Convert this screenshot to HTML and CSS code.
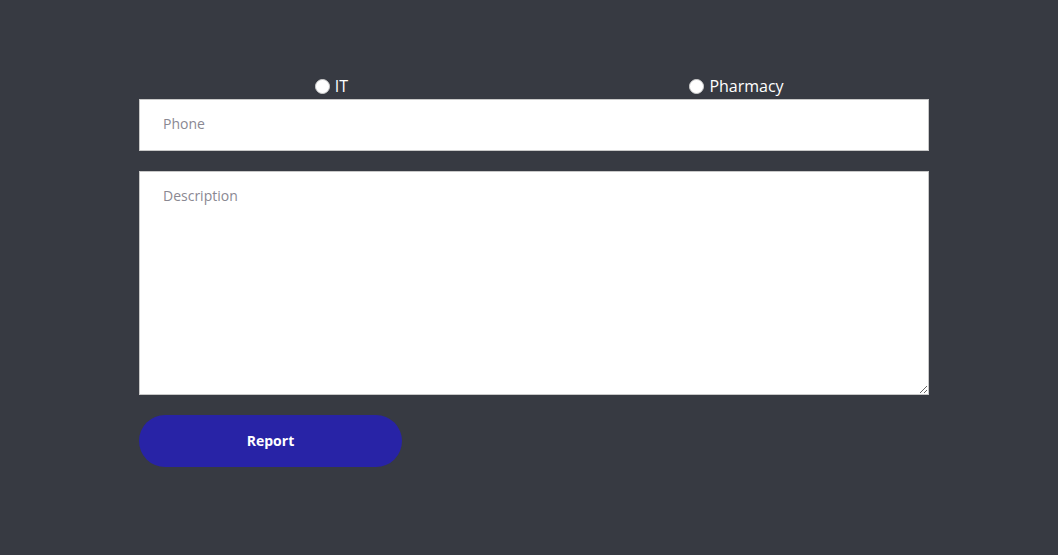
FILE: index.html
```html
<!DOCTYPE html>
<html>
<head>
<meta charset="utf-8">
<link rel="stylesheet" href="styles.css">
</head>
<body>
<form class="report-form">
  <div class="radio-row">
    <label class="radio-opt"><input type="radio" name="dept"> IT</label>
    <label class="radio-opt"><input type="radio" name="dept"> Pharmacy</label>
  </div>
  <input class="field" type="text" placeholder="Phone">
  <textarea class="field area" placeholder="Description"></textarea>
  <button class="btn" type="button">Report</button>
</form>
</body>
</html>
```
FILE: styles.css
```css
html, body {
  margin: 0;
  padding: 0;
  background: #373a42;
  font-family: "Open Sans", sans-serif;
  height: 100%;
}
.report-form {
  width: 790px;
  margin: 0 0 0 139px;
  padding-top: 74px;
  display: flex;
  flex-direction: column;
}
.radio-row {
  display: flex;
  column-gap: 20px;
  height: 25px;
}
.radio-opt {
  flex: 1;
  display: flex;
  justify-content: center;
  align-items: center;
  color: #ffffff;
  font-size: 16px;
  line-height: 25px;
}
.radio-opt input {
  width: 15px;
  height: 15px;
  margin: -1px 5px 0 0;
  appearance: none;
  -webkit-appearance: none;
  background: #ffffff;
  border-radius: 50%;
  border: 1px solid #d0d0d0;
}
.field {
  box-sizing: border-box;
  width: 790px;
  height: 52px;
  border: 1px solid #c8c8c8;
  background: #ffffff;
  padding: 0 23px 4px;
  font-family: "Open Sans", sans-serif;
  font-size: 14px;
  color: #333;
  outline: none;
  margin: 0;
}
.field::placeholder {
  color: #8a8892;
}
.area {
  margin-top: 20px;
  height: 224px;
  padding: 14px 23px;
  resize: vertical;
}
.btn {
  margin-top: 20px;
  width: 263px;
  height: 52px;
  border: none;
  border-radius: 26px;
  background: #2823a6;
  color: #ffffff;
  font-family: "Open Sans", sans-serif;
  font-weight: 700;
  font-size: 14px;
  padding: 0 0 2px;
  cursor: pointer;
}
```
